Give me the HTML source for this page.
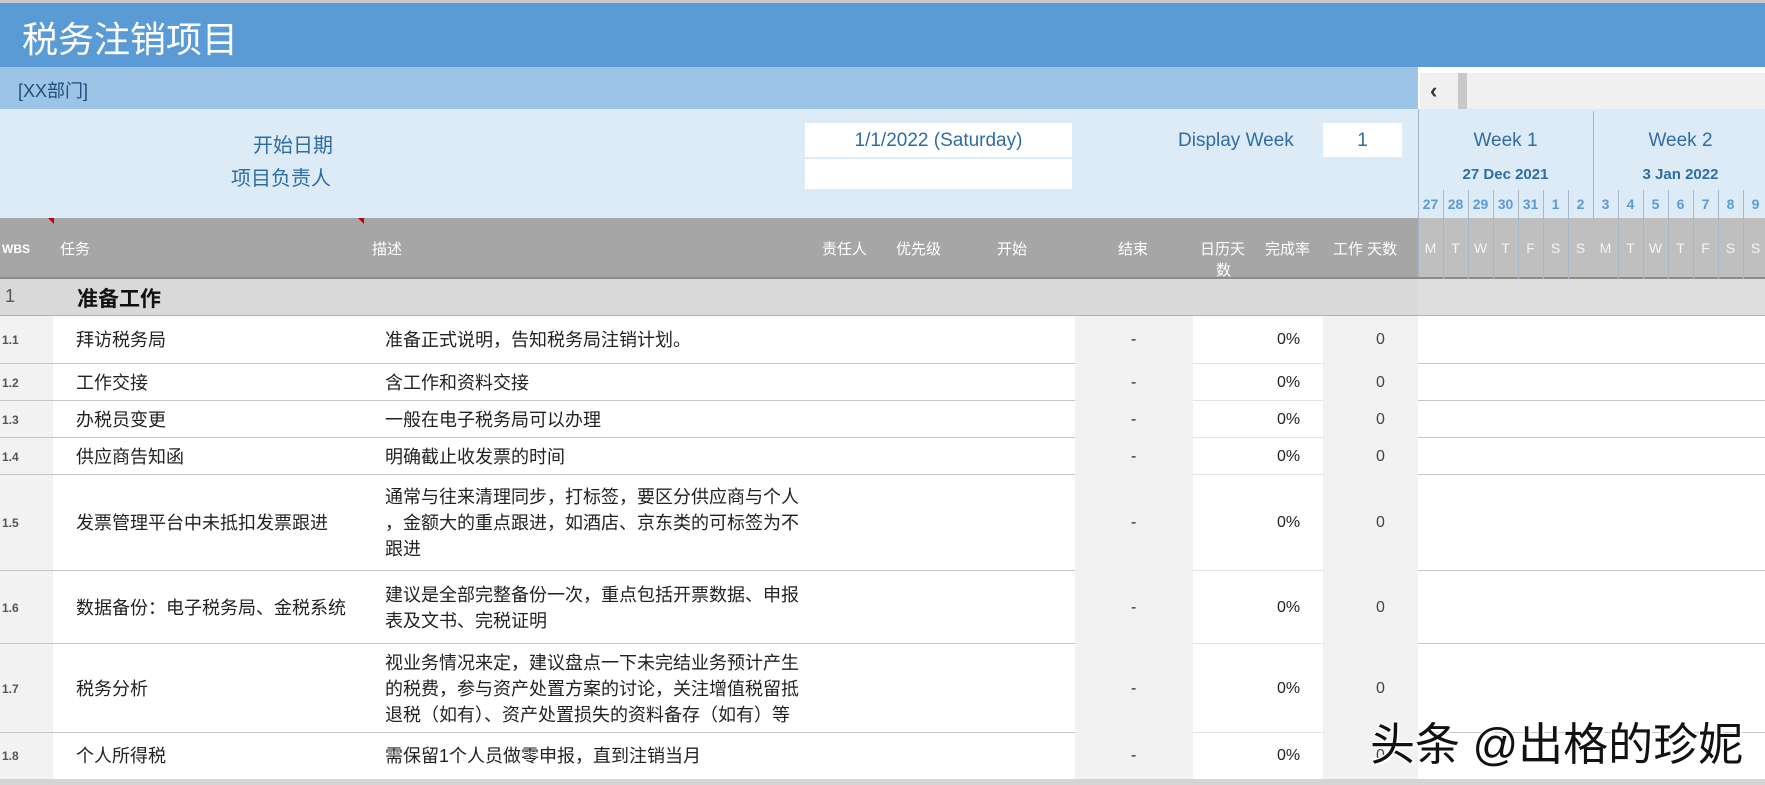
<!DOCTYPE html>
<html><head><meta charset="utf-8"><style>
*{margin:0;padding:0;box-sizing:border-box}
body{width:1765px;height:785px;overflow:hidden;background:#fff;font-family:"Liberation Sans","Noto Sans CJK SC",sans-serif;position:relative}
.a{position:absolute}
.t{position:absolute;white-space:nowrap}
.hd{color:#fff;font-size:15px;top:238px}
.c{font-size:18px;color:#222;line-height:26px}
.vl{position:absolute;width:1px;background:#9fb6cc}
</style></head><body>
<div class="a" style="left:0;top:0;width:1765px;height:3px;background:#c9c9c9"></div>
<div class="a" style="left:0;top:3px;width:1765px;height:64px;background:#5b9bd5"></div>
<div class="t" style="left:22px;top:11px;font-size:36px;color:#fff">税务注销项目</div>
<div class="a" style="left:0;top:67px;width:1418px;height:42px;background:#9dc3e6"></div>
<div class="t" style="left:18px;top:77px;font-size:18px;color:#1f4e79">[XX部门]</div>
<div class="a" style="left:1418px;top:67px;width:347px;height:42px;background:#fff"></div>
<div class="a" style="left:1420px;top:73px;width:345px;height:37px;background:#f0f0f0"></div>
<div class="t" style="left:1430px;top:78px;font-size:22px;color:#333;font-weight:bold">‹</div>
<div class="a" style="left:1458px;top:73px;width:9px;height:37px;background:#c8c8c8"></div>
<div class="a" style="left:0;top:109px;width:1765px;height:109px;background:#ddebf7"></div>
<div class="t" style="left:253px;top:129px;font-size:20px;color:#2e6da4">开始日期</div>
<div class="t" style="left:231px;top:162px;font-size:20px;color:#2e6da4">项目负责人</div>
<div class="a" style="left:805px;top:123px;width:267px;height:34px;background:#fff"></div>
<div class="a" style="left:805px;top:159px;width:267px;height:30px;background:#fff"></div>
<div class="t" style="left:805px;top:130px;width:267px;text-align:center;font-size:19px;color:#2e6da4">1/1/2022 (Saturday)</div>
<div class="t" style="left:1178px;top:130px;font-size:19px;color:#2e6da4">Display Week</div>
<div class="a" style="left:1323px;top:123px;width:79px;height:34px;background:#fff"></div>
<div class="t" style="left:1323px;top:130px;width:79px;text-align:center;font-size:19px;color:#2e6da4">1</div>
<div class="vl" style="left:1418px;top:109px;height:170px"></div>
<div class="vl" style="left:1593px;top:111px;height:168px"></div>
<div class="t" style="left:1418px;top:130px;width:175px;text-align:center;font-size:19px;color:#2e6da4">Week 1</div>
<div class="t" style="left:1593px;top:130px;width:175px;text-align:center;font-size:19px;color:#2e6da4">Week 2</div>
<div class="t" style="left:1418px;top:166px;width:175px;text-align:center;font-size:15px;font-weight:bold;color:#2e6da4">27 Dec 2021</div>
<div class="t" style="left:1593px;top:166px;width:175px;text-align:center;font-size:15px;font-weight:bold;color:#2e6da4">3 Jan 2022</div>
<div class="a" style="left:0;top:218px;width:1418px;height:61px;background:#a6a6a6"></div>
<div class="a" style="left:1419px;top:218px;width:346px;height:59px;background:#bfbfbf"></div>
<div class="a" style="left:0;top:277px;width:1765px;height:2px;background:#8c8c8c"></div>
<div id="days"></div>
<div class="a" style="left:48px;top:218px;width:0;height:0;border-top:6px solid #c00000;border-left:6px solid transparent"></div>
<div class="a" style="left:358px;top:218px;width:0;height:0;border-top:6px solid #c00000;border-left:6px solid transparent"></div>
<div class="t hd" style="left:2px;font-size:12px;font-weight:bold;top:242px">WBS</div>
<div class="t hd" style="left:60px">任务</div>
<div class="t hd" style="left:372px">描述</div>
<div class="t hd" style="left:822px">责任人</div>
<div class="t hd" style="left:896px">优先级</div>
<div class="t hd" style="left:997px">开始</div>
<div class="t hd" style="left:1118px">结束</div>
<div class="t hd" style="left:1200px">日历天</div>
<div class="t hd" style="left:1216px;top:259px">数</div>
<div class="t hd" style="left:1265px">完成率</div>
<div class="t hd" style="left:1333px">工作 天数</div>
<div class="a" style="left:0;top:279px;width:1418px;height:37px;background:#d9d9d9;border-bottom:1px solid #b0b0b0"></div>
<div class="a" style="left:1418px;top:279px;width:347px;height:37px;background:#dedede;border-bottom:1px solid #b0b0b0"></div>
<div class="t" style="left:5px;top:286px;font-size:18px;color:#555">1</div>
<div class="t" style="left:77px;top:283px;font-size:21px;font-weight:bold;color:#111">准备工作</div>
<div id="rows"></div>
<div class="a" style="left:0;top:779px;width:1765px;height:6px;background:#d4d4d4"></div>
<div class="t" style="left:1370px;top:708px;font-size:45px;color:#111;text-shadow:2px 2px 0 #fff,-1px -1px 0 #fff,1px -1px 0 #fff,-1px 1px 0 #fff">头条 @出格的珍妮</div>
<script>
var d=document.getElementById('days'),h='';
var nums=[27,28,29,30,31,1,2,3,4,5,6,7,8,9],let_="MTWTFSSMTWTFSS";
for(var i=0;i<14;i++){var x=1418+i*25;
h+='<div class="t" style="left:'+x+'px;top:196px;width:25px;text-align:center;font-size:14px;font-weight:bold;color:#5b9bd5">'+nums[i]+'</div>';
h+='<div class="t" style="left:'+x+'px;top:240px;width:25px;text-align:center;font-size:14px;color:#f4f4f4">'+let_[i]+'</div>';
if(i>0&&i!=7)h+='<div class="a" style="left:'+x+'px;top:190px;width:1px;height:89px;background:#a8b8c8"></div>';}
d.innerHTML=h;
var R=[
["1.1","拜访税务局",["准备正式说明，告知税务局注销计划。"],316,364],
["1.2","工作交接",["含工作和资料交接"],364,401],
["1.3","办税员变更",["一般在电子税务局可以办理"],401,438],
["1.4","供应商告知函",["明确截止收发票的时间"],438,475],
["1.5","发票管理平台中未抵扣发票跟进",["通常与往来清理同步，打标签，要区分供应商与个人","，金额大的重点跟进，如酒店、京东类的可标签为不","跟进"],475,571],
["1.6","数据备份：电子税务局、金税系统",["建议是全部完整备份一次，重点包括开票数据、申报","表及文书、完税证明"],571,644],
["1.7","税务分析",["视业务情况来定，建议盘点一下未完结业务预计产生","的税费，参与资产处置方案的讨论，关注增值税留抵","退税（如有）、资产处置损失的资料备存（如有）等"],644,733],
["1.8","个人所得税",["需保留1个人员做零申报，直到注销当月"],733,779]];
var s='';
R.forEach(function(r){var y=r[3],ht=r[4]-r[3],m=y+ht/2;
s+='<div class="a" style="left:0;top:'+y+'px;width:53px;height:'+ht+'px;background:#f2f2f2"></div>';
s+='<div class="a" style="left:1075px;top:'+y+'px;width:118px;height:'+ht+'px;background:#f2f2f2"></div>';
s+='<div class="a" style="left:1323px;top:'+y+'px;width:95px;height:'+ht+'px;background:#f2f2f2"></div>';
if(r[0]!="1.8"){s+='<div class="a" style="left:0;top:'+(r[4]-1)+'px;width:1075px;height:1px;background:#c4c4c4"></div>';
s+='<div class="a" style="left:1193px;top:'+(r[4]-1)+'px;width:130px;height:1px;background:#e4e4e4"></div>';
s+='<div class="a" style="left:1418px;top:'+(r[4]-1)+'px;width:347px;height:1px;background:#c4c4c4"></div>';}
s+='<div class="t" style="left:2px;top:'+(m-8)+'px;font-size:12px;font-weight:bold;color:#555;line-height:16px">'+r[0]+'</div>';
s+='<div class="t c" style="left:76px;top:'+(m-13)+'px">'+r[1]+'</div>';
var n=r[2].length,lh=26,ty=m-n*lh/2;
r[2].forEach(function(l,k){s+='<div class="t c" style="left:385px;top:'+(ty+k*lh)+'px">'+l+'</div>';});
s+='<div class="t c" style="left:1131px;top:'+(m-13)+'px;font-size:16px">-</div>';
s+='<div class="t c" style="left:1277px;top:'+(m-13)+'px;font-size:16px">0%</div>';
s+='<div class="t c" style="left:1376px;top:'+(m-13)+'px;color:#444;font-size:16px">0</div>';});
document.getElementById('rows').innerHTML=s;
</script>
</body></html>
